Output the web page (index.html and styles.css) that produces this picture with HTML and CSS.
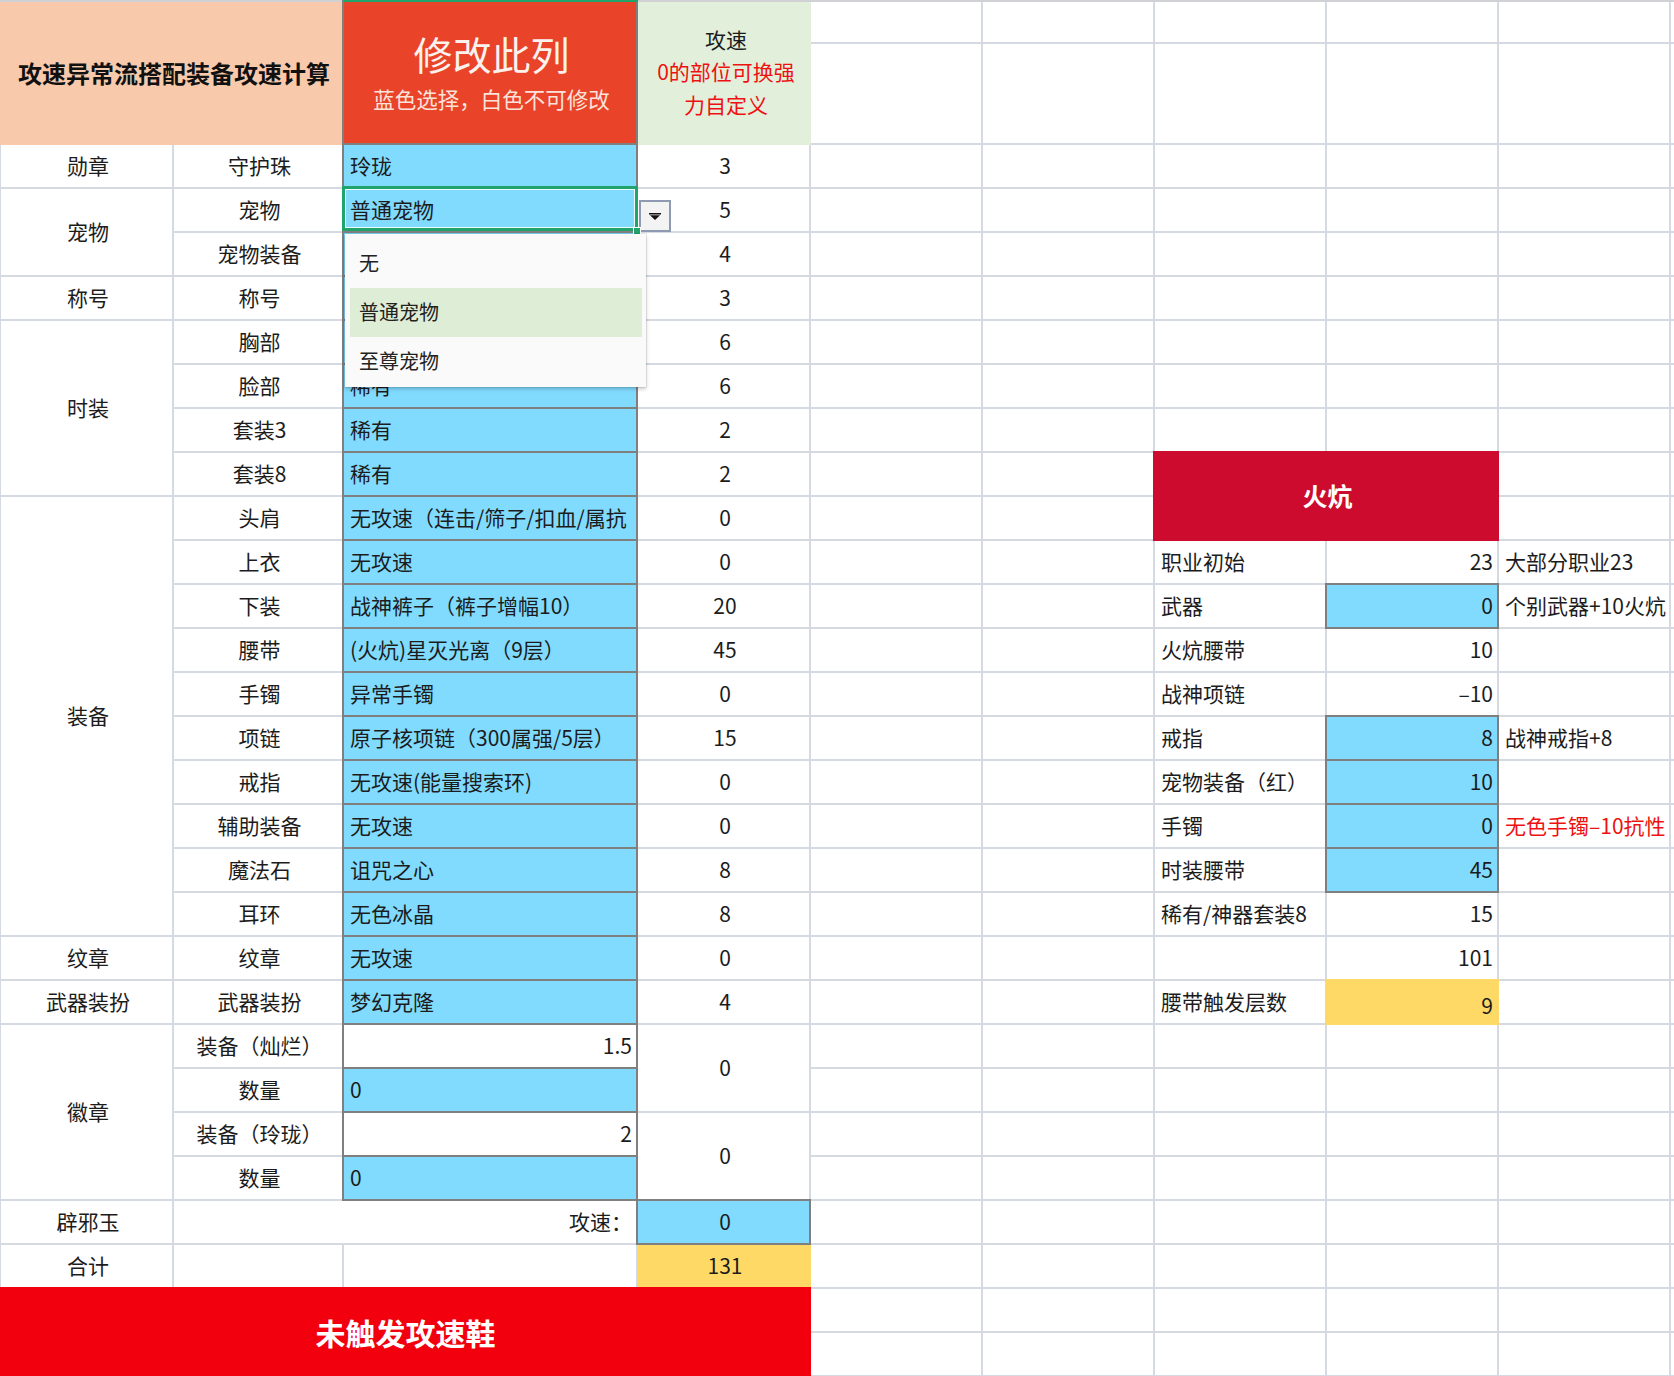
FILE: index.html
```html
<!DOCTYPE html>
<html lang="zh-CN">
<head>
<meta charset="utf-8">
<title>攻速异常流搭配装备攻速计算</title>
<link rel="stylesheet" href="styles.css">
</head>
<body>
<div class="sheet">
  <div class="h-title">攻速异常流搭配装备攻速计算</div>
  <div class="h-edit">
    <div class="h-edit-main">修改此列</div>
    <div class="h-edit-sub">蓝色选择，白色不可修改</div>
  </div>
  <div class="h-speed">
    <div>攻速</div>
    <div class="red">0的部位可换强</div>
    <div class="red">力自定义</div>
  </div>
  <div class="h-rest"></div>

  <!-- row 勋章 -->
  <div class="c k1">勋章</div>
  <div class="c k2">守护珠</div>
  <div class="c k3 bx blue l">玲珑</div>
  <div class="c k4">3</div>

  <!-- row 宠物 -->
  <div class="c k1 s2">宠物</div>
  <div class="c k2">宠物</div>
  <div class="c k3 bx blue l sel">普通宠物
    <div class="dd-btn"><svg width="12" height="7" viewBox="0 0 12 7"><path d="M0 0h12v1.5H0z M1 2.2h10L6 7z" fill="#111"/></svg></div>
    <div class="dd-handle"></div>
    <div class="dd-list">
      <div class="dd-item">无</div>
      <div class="dd-item on">普通宠物</div>
      <div class="dd-item">至尊宠物</div>
    </div>
  </div>
  <div class="c k4">5</div>

  <div class="c k2">宠物装备</div>
  <div class="c k3 bx blue l"></div>
  <div class="c k4">4</div>

  <div class="c k1">称号</div>
  <div class="c k2">称号</div>
  <div class="c k3 bx blue l"></div>
  <div class="c k4">3</div>

  <div class="c k1 s4">时装</div>
  <div class="c k2">胸部</div>
  <div class="c k3 bx blue l"></div>
  <div class="c k4">6</div>

  <div class="c k2">脸部</div>
  <div class="c k3 bx blue l">稀有</div>
  <div class="c k4">6</div>

  <div class="c k2">套装3</div>
  <div class="c k3 bx blue l">稀有</div>
  <div class="c k4">2</div>

  <div class="c k2">套装8</div>
  <div class="c k3 bx blue l">稀有</div>
  <div class="c k4">2</div>
  <div class="c fire">火炕</div>

  <div class="c k1 s10">装备</div>
  <div class="c k2">头肩</div>
  <div class="c k3 bx blue l">无攻速（连击/筛子/扣血/属抗</div>
  <div class="c k4">0</div>

  <div class="c k2">上衣</div>
  <div class="c k3 bx blue l">无攻速</div>
  <div class="c k4">0</div>
  <div class="c k7 l">职业初始</div>
  <div class="c k8 r">23</div>
  <div class="c k9 l note">大部分职业23</div>

  <div class="c k2">下装</div>
  <div class="c k3 bx blue l">战神裤子（裤子增幅10）</div>
  <div class="c k4">20</div>
  <div class="c k7 l">武器</div>
  <div class="c k8 r bx blue">0</div>
  <div class="c k9 l note">个别武器+10火炕</div>

  <div class="c k2">腰带</div>
  <div class="c k3 bx blue l">(火炕)星灭光离（9层）</div>
  <div class="c k4">45</div>
  <div class="c k7 l">火炕腰带</div>
  <div class="c k8 r">10</div>

  <div class="c k2">手镯</div>
  <div class="c k3 bx blue l">异常手镯</div>
  <div class="c k4">0</div>
  <div class="c k7 l">战神项链</div>
  <div class="c k8 r">–10</div>

  <div class="c k2">项链</div>
  <div class="c k3 bx blue l">原子核项链（300属强/5层）</div>
  <div class="c k4">15</div>
  <div class="c k7 l">戒指</div>
  <div class="c k8 r bx blue">8</div>
  <div class="c k9 l note">战神戒指+8</div>

  <div class="c k2">戒指</div>
  <div class="c k3 bx blue l">无攻速(能量搜索环)</div>
  <div class="c k4">0</div>
  <div class="c k7 l">宠物装备（红）</div>
  <div class="c k8 r bx blue">10</div>

  <div class="c k2">辅助装备</div>
  <div class="c k3 bx blue l">无攻速</div>
  <div class="c k4">0</div>
  <div class="c k7 l">手镯</div>
  <div class="c k8 r bx blue">0</div>
  <div class="c k9 l note red">无色手镯–10抗性</div>

  <div class="c k2">魔法石</div>
  <div class="c k3 bx blue l">诅咒之心</div>
  <div class="c k4">8</div>
  <div class="c k7 l">时装腰带</div>
  <div class="c k8 r bx blue">45</div>

  <div class="c k2">耳环</div>
  <div class="c k3 bx blue l">无色冰晶</div>
  <div class="c k4">8</div>
  <div class="c k7 l">稀有/神器套装8</div>
  <div class="c k8 r">15</div>

  <div class="c k1">纹章</div>
  <div class="c k2">纹章</div>
  <div class="c k3 bx blue l">无攻速</div>
  <div class="c k4">0</div>
  <div class="c k8 r">101</div>

  <div class="c k1">武器装扮</div>
  <div class="c k2">武器装扮</div>
  <div class="c k3 bx blue l">梦幻克隆</div>
  <div class="c k4">4</div>
  <div class="c k7 l">腰带触发层数</div>
  <div class="c k8 r yel yel-fill">9</div>

  <div class="c k1 s4">徽章</div>
  <div class="c k2">装备（灿烂）</div>
  <div class="c k3 bx r">1.5</div>
  <div class="c k4 s2">0</div>

  <div class="c k2">数量</div>
  <div class="c k3 bx blue l">0</div>

  <div class="c k2">装备（玲珑）</div>
  <div class="c k3 bx r">2</div>
  <div class="c k4 s2">0</div>

  <div class="c k2">数量</div>
  <div class="c k3 bx blue l">0</div>

  <div class="c k1">辟邪玉</div>
  <div class="c k23 r">攻速：</div>
  <div class="c k4 bx blue">0</div>

  <div class="c k1">合计</div>
  <div class="c k2"></div>
  <div class="c k3"></div>
  <div class="c k4 yel">131</div>

  <div class="banner">未触发攻速鞋</div>
</div>
</body>
</html>
```

FILE: styles.css
```css
:root {
  --g: #d5d9e2;
  --d: #7f7f7f;
  --blue: #80dbff;
  --yel: #ffd966;
}

* { box-sizing: border-box; }

html, body {
  margin: 0;
  padding: 0;
  overflow: hidden;
  background: #fff;
}

body {
  font-family: "Noto Sans CJK SC", "Noto Sans", sans-serif;
  font-size: 21px;
  color: #1c1c1c;
}

.sheet {
  display: grid;
  grid-template-columns: 174px 170px 294px 173px repeat(5, 172px) 1fr;
  grid-template-rows: 42px 101px repeat(27, 44px) 43px;
  width: 1674px;
  border-top: 2px solid #cfd1d5;
  background-color: #fff;
  background-image:
    linear-gradient(to right, var(--g) 2px, transparent 2px),
    linear-gradient(to bottom, var(--g) 2px, transparent 2px);
  background-size: 172px 100%, 100% 44px;
  background-position: 981px 0, 0 185px;
}

/* header */
.h-title {
  grid-column: 1 / 3;
  grid-row: 1 / 3;
  background: #f8caab;
  display: flex;
  align-items: center;
  justify-content: center;
  font-size: 24px;
  font-weight: bold;
  color: #111;
  padding-left: 4px;
  padding-bottom: 2px;
}

.h-edit {
  grid-column: 3;
  grid-row: 1 / 3;
  background: #e9432a;
  border-right: 2px solid var(--d);
  border-bottom: 2px solid var(--d);
  box-shadow: 0 -2px 0 #1fa46a, -2px 0 0 var(--d), -2px -2px 0 var(--d);
  display: flex;
  flex-direction: column;
  align-items: center;
  padding-top: 28px;
  padding-left: 3px;
}

.h-edit-main {
  font-size: 39px;
  line-height: 47px;
  color: #fbf1ed;
}

.h-edit-sub {
  margin-top: 7px;
  font-size: 21.5px;
  line-height: 30px;
  color: #fbe3da;
}

.h-speed {
  grid-column: 4;
  grid-row: 1 / 3;
  background: #e2efda;
  display: flex;
  flex-direction: column;
  align-items: center;
  justify-content: center;
  line-height: 32.5px;
  font-size: 21px;
  padding-left: 3px;
  padding-bottom: 4px;
}

.h-rest {
  grid-column: 5 / 11;
  grid-row: 1 / 3;
  background-color: #fff;
  background-image:
    linear-gradient(to right, var(--g) 2px, transparent 2px),
    linear-gradient(to bottom, transparent 40px, var(--g) 40px, var(--g) 42px, transparent 42px);
  background-size: 172px 100%, 100% 100%;
  background-position: 170px 0, 0 0;
  background-repeat: repeat-x, no-repeat;
  border-bottom: 2px solid var(--g);
}

.red { color: #ee1111; }

/* cells */
.c {
  border-right: 2px solid var(--g);
  border-bottom: 2px solid var(--g);
  background: #fff;
  display: flex;
  align-items: center;
  justify-content: center;
  overflow: hidden;
  white-space: nowrap;
  min-width: 0;
  line-height: 1;
  padding-left: 3px;
  padding-bottom: 2px;
}

.k1 { grid-column: 1; border-left: 1px solid var(--g); }
.k2 { grid-column: 2; }
.k3 { grid-column: 3; }
.k23 { grid-column: 2 / 4; }
.k4 { grid-column: 4; }
.k7 { grid-column: 7; }
.k8 { grid-column: 8; }
.k9 { grid-column: 9; }

.s2 { grid-row: span 2; }
.s4 { grid-row: span 4; }
.s10 { grid-row: span 10; }

.l { justify-content: flex-start; padding-left: 6px; }
.r { justify-content: flex-end; padding-right: 4px; }

.bx {
  border-color: var(--d);
  box-shadow: -2px 0 0 var(--d), 0 -2px 0 var(--d), -2px -2px 0 var(--d);
}

.blue { background: var(--blue); }

.yel {
  background: var(--yel);
  border-color: var(--yel);
}

.yel-fill {
  box-shadow: -2px 0 0 var(--yel), 0 -2px 0 var(--yel), -2px -2px 0 var(--yel);
  padding-top: 6px;
  padding-bottom: 0;
}

.note { overflow: visible; }

.fire {
  grid-column: 7 / 9;
  grid-row: span 2;
  background: #cc0b2e;
  border-color: #cc0b2e;
  box-shadow: -2px 0 0 #cc0b2e, 0 -2px 0 #cc0b2e, -2px -2px 0 #cc0b2e;
  color: #fff;
  font-weight: bold;
  font-size: 25px;
}

.banner {
  grid-column: 1 / 5;
  grid-row: span 2;
  background: #f3000f;
  box-shadow: 0 -2px 0 #f3000f;
  color: #fff;
  font-weight: bold;
  font-size: 30px;
  display: flex;
  align-items: center;
  justify-content: center;
  padding-bottom: 2px;
}

/* selected cell with dropdown */
.sel {
  position: relative;
  overflow: visible;
  z-index: 2;
}

.sel::after {
  content: "";
  position: absolute;
  left: -2px;
  top: -3px;
  right: -2px;
  bottom: 0;
  border: 3px solid #20a46b;
  box-shadow: inset 0 0 0 1px rgba(255, 255, 255, 0.85);
  pointer-events: none;
}

.dd-handle {
  position: absolute;
  left: 289px;
  top: 38px;
  width: 8px;
  height: 8px;
  background: #20a46b;
  border: 1px solid #fff;
  z-index: 4;
}

.dd-btn {
  position: absolute;
  left: 295px;
  top: 11px;
  width: 32px;
  height: 32px;
  border: 2px solid #8e9ab1;
  background: #f3f3f3;
  display: flex;
  align-items: center;
  justify-content: center;
  z-index: 3;
}

.dd-list {
  position: absolute;
  left: 1px;
  top: 45px;
  width: 301px;
  height: 153px;
  padding-top: 5px;
  background: #fafafa;
  box-shadow: 0 0 0 1px rgba(0, 0, 0, 0.07), 0 2px 4px rgba(0, 0, 0, 0.22);
  z-index: 5;
  font-size: 20px;
  color: #222;
  line-height: 1;
}

.dd-item {
  height: 49px;
  margin: 0 4px 0 5px;
  padding-left: 9px;
  padding-bottom: 2px;
  display: flex;
  align-items: center;
}

.dd-item.on { background: #deedd5; }
```
